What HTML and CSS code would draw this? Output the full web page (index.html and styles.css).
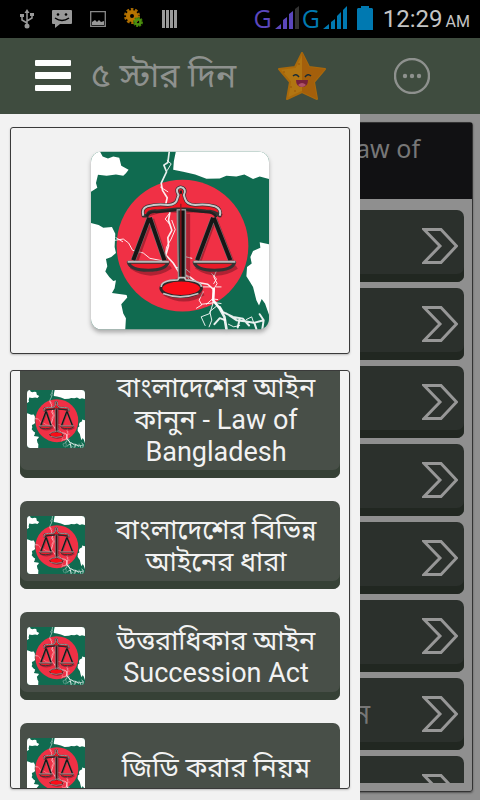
FILE: index.html
```
<!DOCTYPE html>
<html lang="bn">
  <head>
    <meta charset="utf-8">
    <meta name="viewport" content="width=device-width, initial-scale=1">
    <title>Law of Bangladesh</title>
    <link rel="stylesheet" href="styles.css">
  </head>
  <body>
    <!-- shared icons -->
    <svg class="defs" aria-hidden="true">
      <symbol id="arrow" viewBox="0 0 36 36">
        <path d="M2 1.500H19L34.500 18L19 34.500H2L18 18Z" fill="none" stroke="currentColor" stroke-width="3"/>
      </symbol>
      <symbol id="logo" viewBox="33 33 535 535">
        <clipPath id="tile"><rect x="33" y="33" width="535" height="535" rx="32"/></clipPath>
        <linearGradient id="metal" x1="0" x2="1">
          <stop offset="0" stop-color="#777"/><stop offset=".4" stop-color="#111"/><stop offset=".8" stop-color="#111"/><stop offset="1" stop-color="#555"/>
        </linearGradient>
        <g clip-path="url(#tile)">
          <rect x="33" y="33" width="535" height="535" fill="#106b50"/>
          <path fill="#fff" d="M33 33H60L68 48L84 54L100 48L118 52L124 76L146 88L138 98L130 106L108 102L80 106L54 103L48 128L52 142L33 154Z"/>
          <path fill="#fff" d="M288 33H568V116L540 108L520 116L494 102L470 108L440 106L420 114L380 115L346 102L310 94L280 88L282 62Z"/>
          <path fill="#fff" d="M33 248L56 254L70 262L96 260L106 280L104 320L108 338L94 350L78 356L82 378L76 394L88 410L100 422L108 420L104 444L96 458L140 464L142 472L124 492L130 520L138 534L136 568H33Z"/>
          <path fill="#fff" d="M568 312L540 306L542 322L520 332L512 350L516 370L502 380L500 408L510 424L520 440L530 480L538 496L546 476L556 490L568 524Z"/>
          <circle cx="308" cy="316" r="198" fill="#f03045"/>
          <g fill="none" stroke="#fff" stroke-opacity=".9" stroke-linejoin="round" stroke-linecap="round">
            <path stroke-width="5" d="M268 35L264 66L252 74L260 94L244 128L248 150L262 172L258 190L270 216L266 240L276 270L264 292L266 316L258 344L280 368L300 400L330 410L350 426L384 432L402 448L400 480L420 505"/>
            <path stroke-width="3" d="M262 60L274 70L262 90M242 140L264 154M268 220L256 236L268 250M276 240L286 268L274 296L260 320L256 345"/>
            <path stroke-width="3" d="M104 300L130 296L146 308L158 330L190 338L210 354L250 362M108 292L128 304"/>
            <path stroke-width="3" d="M330 396L310 380L290 382M320 404L340 440L390 440M400 450L412 430L402 410L410 392M410 440L424 440M370 455L358 480L366 494L350 504M366 492L400 488L390 520L364 530L376 556M398 486L424 490M410 498L390 514L396 540L388 560"/>
            <path stroke-width="8" d="M402 446L400 480L420 505L434 530L440 566"/>
            <path stroke-width="6" d="M420 500L430 516L460 530L490 536L508 556M436 540L420 534L404 552M440 520L470 540L500 544L522 548L552 540M480 536L474 562M524 548L530 566M540 522L552 540L548 566"/>
            <path stroke-width="3" d="M396 400L410 416L402 430M320 350L336 354M380 492L398 476L414 478M446 552L462 560L480 556M500 538L516 530L522 548"/>
          </g>
          <g fill="none" stroke="#4b1018" stroke-opacity=".4" stroke-width="12" transform="translate(7 8)">
            <path d="M208 228L160 360M210 228L254 360M398 228L350 360M400 228L452 360M190 218Q240 194 300 206Q370 194 420 218M146 372Q205 412 266 372M342 372Q402 412 464 372M246 452Q305 488 364 452M318 212V412"/>
          </g>
          <g stroke-linejoin="round">
            <path fill="none" stroke="#777" stroke-width="15" d="M208 232L160 360M210 232L254 360M400 232L352 360M402 232L452 360"/>
            <path fill="none" stroke="#161616" stroke-width="12" d="M208 232L160 360M210 232L254 360M400 232L352 360M402 232L452 360"/>
            <path fill="#ee1825" stroke="#333" stroke-width="10" d="M190 226Q184 204 202 198Q230 190 264 194Q290 192 292 176L296 164Q284 144 302 140Q322 144 312 164L316 176Q320 192 346 194Q380 190 406 198Q426 206 420 226Q404 212 378 212L318 206H292L232 212Q204 210 202 226Z"/>
            <path fill="none" stroke="#c9c9c9" stroke-width="6" d="M190 226Q184 204 202 198Q230 190 264 194Q290 192 292 176L296 164Q284 144 302 140Q322 144 312 164L316 176Q320 192 346 194Q380 190 406 198Q426 206 420 226"/>
            <path fill="none" stroke="#222" stroke-width="7" d="M200 228Q208 212 230 215L290 209M318 209L378 215Q400 214 410 230M303 150V160"/>
            <path fill="url(#metal)" stroke="#8e8e8e" stroke-width="4" d="M292 208H317V420H296Z"/>
            <path stroke="#8c1820" stroke-width="4" d="M303 190V412"/>
            <path fill="#e91b28" stroke="#333" stroke-width="9" d="M145 366H265Q258 390 205 390Q152 390 145 366ZM343 366H465Q458 390 404 390Q350 390 343 366Z"/>
            <path fill="none" stroke="#b9b9b9" stroke-width="6" d="M143 364H267M341 364H467"/>
            <ellipse cx="304" cy="444" rx="61" ry="25" fill="#fa0d18" stroke="#292929" stroke-width="9"/>
            <path fill="none" stroke="#c4c4c4" stroke-width="5" d="M244 440Q244 420 294 419L298 412H314L318 419Q364 422 365 440M250 460Q300 480 356 460"/>
          </g>
        </g>
      </symbol>
    </svg>

    <div class="app">
      <div class="statusbar">
        <div class="notices">
          <svg width="14" height="20" viewBox="0 0 14 20" fill="none" stroke="#999" stroke-width="1.500">
            <path d="M7 17V2M7 14L2 11V6M7 12L12 9V5"/><path fill="#999" stroke="none" d="M7 0L9.500 4H4.500ZM0 5H4V8H0ZM10 4H14V7H10Z"/><circle cx="7" cy="17" r="2.500" fill="#999" stroke="none"/>
          </svg>
          <svg width="20" height="20" viewBox="0 0 20 20">
            <path fill="#999" d="M1 1H19Q20 1 20 2V14Q20 15 19 15H8L3 19V15H1Q0 15 0 14V2Q0 1 1 1Z"/><circle cx="6" cy="5.500" r="1.300"/><circle cx="14" cy="5.500" r="1.300"/><path d="M3 9Q10 14 17 9" fill="none" stroke="#000" stroke-width="1.500"/>
          </svg>
          <svg width="16" height="16" viewBox="0 0 16 16">
            <path d="M.7.700H15.300V15.300H.7Z" fill="none" stroke="#888" stroke-width="1.300"/><path fill="#999" d="M2 14V11L5 9L7 11L9 9L11 11L14 10V14Z"/>
          </svg>
          <svg width="20" height="22" viewBox="0 0 20 22" fill="none">
            <circle cx="8" cy="8" r="6.500" stroke="#a86a00" stroke-width="3" stroke-dasharray="2.500 1.600"/><circle cx="8" cy="8" r="4" stroke="#b87400" stroke-width="4"/><circle cx="14" cy="14" r="4" stroke="#3f7c08" stroke-width="2" stroke-dasharray="2 1"/><circle cx="14" cy="14" r="2.500" stroke="#4c9010" stroke-width="2.500"/>
          </svg>
          <svg width="16" height="18" viewBox="0 0 16 18"><path fill="#999" d="M0 0H3V18H0ZM4 0H7V18H4ZM8 0H11V18H8ZM12 0H15V18H12Z"/></svg>
        </div>
        <div class="signals">
          <span class="net sim1">G</span>
          <svg width="24" height="24" viewBox="0 0 24 24"><path fill="#5b47bd" d="M0 23L6 18V23ZM8 14L12 11V23H8ZM14 8L18 5V23H14Z"/><path fill="#333" d="M20 3L24 0V23H20Z"/></svg>
          <span class="net sim2">G</span>
          <svg width="24" height="24" viewBox="0 0 24 24"><path fill="#0079b1" d="M0 23L6 18V23ZM8 16L12 13V23H8ZM14 10L18 6V23H14ZM20 4L24 0V23H20Z"/></svg>
          <svg class="battery" width="16" height="24" viewBox="0 0 16 24"><path fill="#0079b1" d="M4 0H12V2H15L16 3V24H0V3L1 2H4Z"/></svg>
          <div class="clock"><span class="time">12:29</span><span class="ampm">AM</span></div>
        </div>
      </div>

      <header class="toolbar">
        <button class="menu" aria-label="Menu">
          <svg width="36" height="32" viewBox="0 0 36 32" fill="#fff"><rect width="36" height="6" rx="1"/><rect y="12" width="36" height="7" rx="1"/><rect y="25" width="36" height="6" rx="1"/></svg>
        </button>
        <a class="rate" href="#">৫ স্টার দিন</a>
        <button class="star" aria-label="Rate">
          <svg width="48" height="48" viewBox="0 0 48 48">
            <path fill="#b17512" stroke="#a9690b" stroke-width="2" stroke-linejoin="round" d="M24 1L31 15L47 17L36 30L39 47L24 40L9 47L12 30L1 17L17 15Z"/>
            <path fill="#a45f0b" d="M24 0L31 15L47 17L36 30L39 47L24 40Z"/>
            <path fill="#77213b" d="M18 28H30Q30 35 24 35Q18 35 18 28Z"/><path fill="#af5269" d="M20 33Q24 29 28 33Q24 37 20 33Z"/>
            <path fill="none" stroke="#182b35" stroke-width="1.500" d="M15 24Q18 21 21 25M27 25Q30 21 33 24"/>
            <g fill="#a1600b"><circle cx="21" cy="12" r="1"/><circle cx="6" cy="20" r="1"/><circle cx="13" cy="35" r="1"/><circle cx="31" cy="38" r="1"/><circle cx="17" cy="39" r="1"/></g>
          </svg>
        </button>
        <button class="more" aria-label="More">
          <svg width="36" height="36" viewBox="0 0 36 36" fill="#8e918e"><circle cx="18" cy="18" r="17" fill="none" stroke="#8e918e" stroke-width="2.400"/><circle cx="11" cy="18" r="2.200"/><circle cx="18" cy="18" r="2.200"/><circle cx="25" cy="18" r="2.200"/></svg>
        </button>
      </header>

      <div class="content">
        <main class="page">
          <h1 class="page-title">Law of</h1>
          <div class="rows">
            <button class="row" aria-label="১"><svg><use href="#arrow"/></svg></button>
            <button class="row" aria-label="২"><svg><use href="#arrow"/></svg></button>
            <button class="row" aria-label="৩"><svg><use href="#arrow"/></svg></button>
            <button class="row" aria-label="৪"><svg><use href="#arrow"/></svg></button>
            <button class="row" aria-label="৫"><svg><use href="#arrow"/></svg></button>
            <button class="row" aria-label="৬"><svg><use href="#arrow"/></svg></button>
            <button class="row"><span>আইন</span><svg><use href="#arrow"/></svg></button>
            <button class="row" aria-label="৮"><svg><use href="#arrow"/></svg></button>
          </div>
        </main>

        <nav class="drawer">
          <div class="card banner">
            <svg class="logo"><use href="#logo"/></svg>
          </div>
          <div class="card list">
            <div class="items">
              <a class="item" href="#"><svg class="thumb"><use href="#logo"/></svg><span>বাংলাদেশের আইন<br>কানুন - Law of<br>Bangladesh</span></a>
              <a class="item" href="#"><svg class="thumb"><use href="#logo"/></svg><span>বাংলাদেশের বিভিন্ন<br>আইনের ধারা</span></a>
              <a class="item" href="#"><svg class="thumb"><use href="#logo"/></svg><span>উত্তরাধিকার আইন<br>Succession Act</span></a>
              <a class="item" href="#"><svg class="thumb"><use href="#logo"/></svg><span>জিডি করার নিয়ম</span></a>
            </div>
          </div>
        </nav>
      </div>
    </div>
  </body>
</html>
```
FILE: styles.css
```
* {
  box-sizing: border-box;
}
body {
  margin: 0;
  font-family: Roboto, "Noto Sans Bengali", "Noto Sans", sans-serif;
  background-color: #8f8f8f;
}
button {
  border: 0;
  padding: 0;
  background: none;
  font: inherit;
}
a {
  text-decoration: none;
}
svg {
  display: block;
  flex-shrink: 0;
}
.defs {
  position: absolute;
  width: 0;
  height: 0;
}
.app {
  display: flex;
  flex-direction: column;
  height: 100vh;
  overflow: hidden;
}

/* status bar */
.statusbar {
  display: flex;
  justify-content: space-between;
  align-items: center;
  height: 38px;
  padding: 0 10px 0 20px;
  background-color: #000;
  flex-shrink: 0;
}
.notices {
  display: flex;
  align-items: center;
  gap: 18px;
}
.signals {
  display: flex;
  align-items: center;
  gap: 3px;
}
.signals svg {
  margin-bottom: 2px;
}
.net {
  font-family: "Open Sans", sans-serif;
  font-size: 25px;
  line-height: 32px;
  padding-bottom: 3px;
}
.sim1 {
  color: #5b47bd;
}
.sim2 {
  color: #0079b1;
}
.battery {
  margin: 0 7px;
}
.clock {
  display: flex;
  align-items: baseline;
  gap: 3px;
  color: #c4c4c4;
  font-size: 24px;
  line-height: 36px;
  padding-top: 2px;
}
.ampm {
  font-size: 16px;
}

/* toolbar */
.toolbar {
  display: flex;
  align-items: center;
  height: 76px;
  padding: 0 50px 0 35px;
  background-color: #3f4c3f;
  flex-shrink: 0;
}
.rate {
  margin-left: 20px;
  padding-bottom: 2px;
  color: #8e918e;
  font-size: 34px;
  line-height: 48px;
  white-space: nowrap;
}
.star {
  margin-left: auto;
}
.more {
  margin-left: 68px;
}

/* page under the drawer */
.content {
  position: relative;
  flex: 1;
  min-height: 0;
  padding: 8px 7px 8px 8px;
}
.page {
  display: flex;
  flex-direction: column;
  height: 100%;
  border: 1px solid #333;
  border-radius: 3px;
  box-shadow: 0 1px 2px #555;
}
.page-title {
  height: 76px;
  margin: 0;
  padding: 7px 52px 0 0;
  background-color: #111113;
  color: #777;
  font-family: "Noto Sans", sans-serif;
  font-size: 25px;
  font-weight: 400;
  line-height: 36px;
  text-align: right;
  flex-shrink: 0;
}
.rows {
  display: flex;
  flex-direction: column;
  gap: 6px;
  margin: 11px 8px 8px;
  overflow: hidden;
}
.row {
  display: flex;
  align-items: center;
  justify-content: flex-end;
  gap: 52px;
  height: 72px;
  padding-right: 6px;
  border-radius: 7px;
  background-color: #2b302c;
  box-shadow: inset 0 -8px #212721;
  color: #777;
  font-size: 28px;
  flex-shrink: 0;
}
.row span {
  padding-top: 4px;
}
.row svg {
  width: 36px;
  height: 36px;
  color: #979797;
}

/* drawer */
.drawer {
  position: absolute;
  top: 0;
  left: 0;
  bottom: 0;
  width: 75%;
  display: flex;
  flex-direction: column;
  gap: 16px;
  padding: 13px 10px 11px;
  background-color: #f2f2f2;
}
.card {
  border: 1px solid #3a3a3a;
  border-radius: 3px;
  box-shadow: 0 1px 2px #bbb;
}
.banner {
  display: flex;
  justify-content: center;
  padding: 23px 0;
}
.logo {
  width: 178px;
  height: 179px;
  filter: drop-shadow(0 3px 2px #aaa);
}
.list {
  flex: 1;
  min-height: 0;
  overflow: hidden;
}
.items {
  display: flex;
  flex-direction: column;
  gap: 23px;
  margin: -11px 9px 0;
}
.item {
  display: flex;
  align-items: center;
  min-height: 88px;
  padding: 10px 7px;
  border-radius: 7px;
  background-color: #484f48;
  box-shadow: inset 0 -8px #364136;
  color: #f2f2f2;
  font-size: 27px;
  line-height: 32px;
  text-align: center;
}
.item span {
  flex: 1;
  margin-left: 14px;
  padding-top: 2px;
  white-space: nowrap;
}
.thumb {
  width: 58px;
  height: 58px;
}
```
